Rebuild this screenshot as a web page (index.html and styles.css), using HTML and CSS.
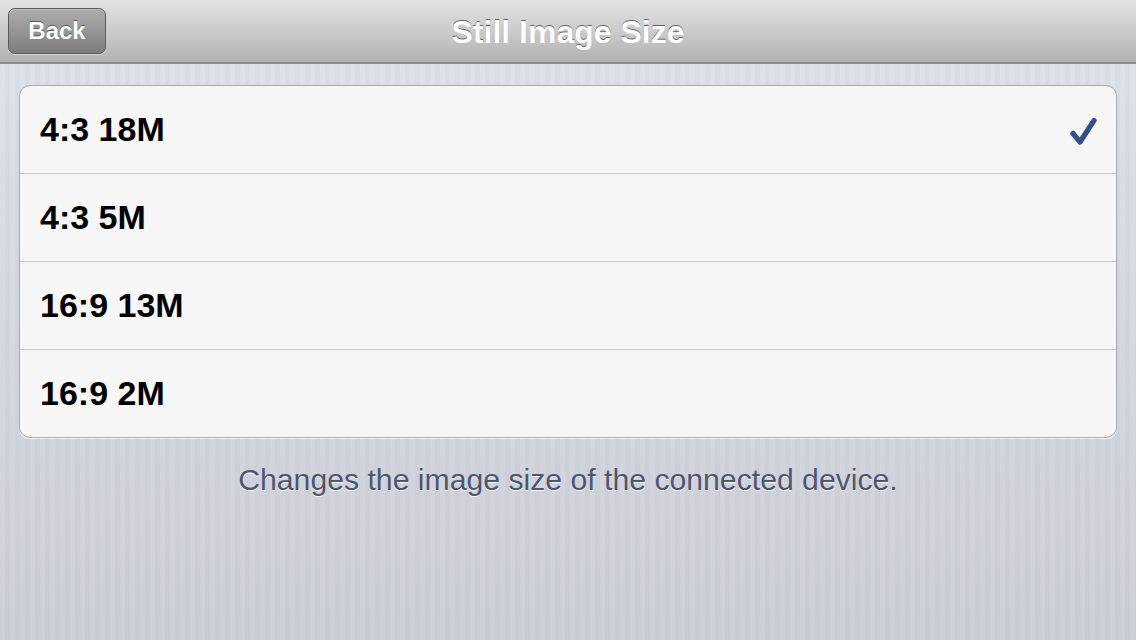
FILE: index.html
```html
<!DOCTYPE html>
<html lang="en">
<head>
  <meta charset="UTF-8">
  <title>Still Image Size</title>
  <meta name="viewport" content="width=device-width, initial-scale=1">
  <link rel="stylesheet" href="styles.css">
</head>
<body>
  <div class="navbar">
    <button class="back">Back</button>
    <h1 class="title">Still Image Size</h1>
  </div>

  <div class="content">
    <ul class="group">
      <li class="cell">
        <span>4:3 18M</span>
        <svg class="check" width="28" height="30" viewBox="0 0 28 30">
          <path d="M4 18.5 L11 27 L25 5.5" fill="none" stroke="#34508a" stroke-width="5.2" stroke-linecap="round" stroke-linejoin="round"/>
        </svg>
      </li>
      <li class="cell"><span>4:3 5M</span></li>
      <li class="cell"><span>16:9 13M</span></li>
      <li class="cell"><span>16:9 2M</span></li>
    </ul>
    <p class="footer">Changes the image size of the connected device.</p>
  </div>
</body>
</html>
```

FILE: styles.css
```css
html, body {
  margin: 0;
  height: 100%;
}
body {
  font-family: "Liberation Sans", Arial, sans-serif;
  background-color: #d3d7e0;
  background-image:
    repeating-linear-gradient(90deg, rgba(255,255,255,0.06) 0 5px, rgba(0,0,0,0.01) 5px 10px),
    linear-gradient(#dde1ea, #c9cdd6);
  overflow: hidden;
}
.navbar {
  height: 62px;
  border-bottom: 2px solid #8c8c8c;
  background: linear-gradient(#e4e4e4, #b2b2b2);
  position: relative;
  display: flex;
  align-items: center;
  justify-content: center;
}
.back {
  position: absolute;
  left: 8px;
  top: 8px;
  width: 98px;
  height: 46px;
  border: 1px solid #5c5c5c;
  border-radius: 7px;
  background: linear-gradient(#aeaeae, #7d7d7d);
  box-shadow: inset 0 1px 0 rgba(255,255,255,0.25), 0 1px 0 rgba(255,255,255,0.4);
  color: #fff;
  font-family: "Liberation Sans", Arial, sans-serif;
  font-weight: bold;
  font-size: 24px;
  text-shadow: 0 -1px 0 rgba(0,0,0,0.45);
  padding: 0;
}
.title {
  margin: 0;
  font-size: 32px;
  font-weight: bold;
  color: #fff;
  text-shadow: 0 -1px 0 rgba(0,0,0,0.55);
  padding-top: 2px;
}
.content {
  padding: 21px 19px 0;
}
.group {
  list-style: none;
  margin: 0;
  padding: 0;
  background: #f7f7f7;
  border: 1px solid #a6a9b0;
  border-radius: 11px;
  box-shadow: 0 1px 0 rgba(255,255,255,0.8);
  overflow: hidden;
}
.cell {
  height: 87px;
  display: flex;
  align-items: center;
  justify-content: space-between;
  padding: 0 19px 0 20px;
  border-top: 1px solid #c8c8c8;
  font-size: 34px;
  font-weight: bold;
  color: #000;
}
.cell:first-child {
  border-top: none;
}
.check {
  display: block;
}
.footer {
  margin: 25px 0 0;
  text-align: center;
  font-size: 30.2px;
  color: #4c566c;
  text-shadow: 0 1px 0 rgba(255,255,255,0.9);
}
```
